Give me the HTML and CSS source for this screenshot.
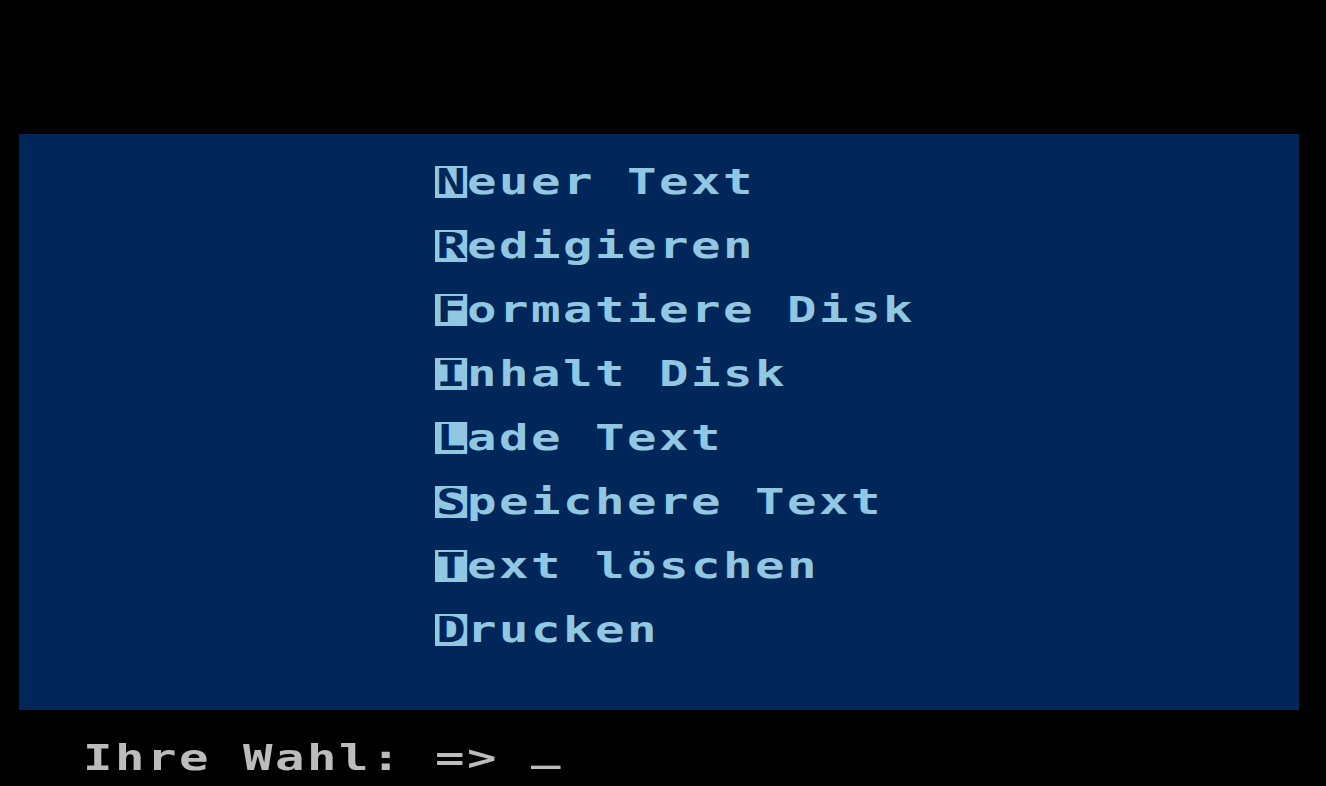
FILE: index.html
```html
<!DOCTYPE html>
<html>

<head>
    <meta charset="UTF-8">
    <title>Textverarbeitung</title>
    <link rel="stylesheet" href="styles.css">
</head>

<body>
    <div id="screen">
        <div id="menu">
            <div class="item"><span class="key">N</span>euer Text</div>
            <div class="item"><span class="key">R</span>edigieren</div>
            <div class="item"><span class="key">F</span>ormatiere Disk</div>
            <div class="item"><span class="key">I</span>nhalt Disk</div>
            <div class="item"><span class="key">L</span>ade Text</div>
            <div class="item"><span class="key">S</span>peichere Text</div>
            <div class="item"><span class="key">T</span>ext löschen</div>
            <div class="item"><span class="key">D</span>rucken</div>
        </div>
        <div id="prompt">Ihre Wahl: =&gt; <span class="cursor">_</span></div>
    </div>
</body>

</html>
```

FILE: styles.css
```css
html,
body {
    margin: 0;
    background-color: #000;
}

#screen {
    padding: 134px 0 0 19px;
    height: 652px;
    overflow: hidden;
}

/* each character cell is 32 x 32, glyphs stretched to look like the 8x8 font */
#menu {
    width: 1280px;
    height: 576px;
    box-sizing: border-box;
    padding: 32px 0 0 416px;
    background-color: #00265a;
    color: #90c8e2;
}

.item,
#prompt {
    font-family: "DejaVu Sans Mono", monospace;
    font-weight: bold;
    font-size: 35px;
    height: 32px;
    line-height: 32px;
    letter-spacing: 1.79px;
    white-space: pre;
    transform: scaleX(1.4);
    transform-origin: left top;
}

.item {
    margin-bottom: 32px;
}

.key {
    display: inline-block;
    width: 22.857px;
    height: 32px;
    letter-spacing: 0;
    text-align: center;
    background-color: #90c8e2;
    color: #00265a;
}

#prompt {
    margin: 32px 0 0 64px;
    color: #bcbcbc;
}

/* the underscore sits on the last pixel row of the cell, not below it */
.cursor {
    display: inline-block;
    transform: translateY(-9px);
}
```
